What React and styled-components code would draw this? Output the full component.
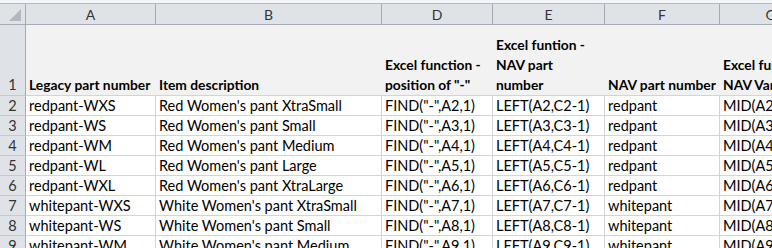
import React from "react";
import styled, { createGlobalStyle } from "styled-components";

const GlobalStyle = createGlobalStyle`
  html, body {
    margin: 0;
    padding: 0;
    background: #ffffff;
  }
  body {
    width: 772px;
    height: 248px;
    overflow: hidden;
    font-family: Lato, "Open Sans", sans-serif;
  }
`;

const Sheet = styled.div`
  width: 772px;
  height: 248px;
  overflow: hidden;
  display: flex;
  flex-direction: column;
`;

const TopStrip = styled.div`
  height: 3px;
  flex: none;
  background: #f3f5f8;
  border-bottom: 1px solid #b4bac2;
`;

const Grid = styled.div`
  display: grid;
  grid-template-columns: 26px 130px 226px 111px 112px 115px 102px;
  grid-template-rows: 21px 71px repeat(8, 20px);
  width: max-content;
`;

const ColHead = styled.div`
  background: #dfe3e8;
  border-right: 1px solid #a4abb4;
  border-bottom: 1px solid #a4abb4;
  display: flex;
  align-items: center;
  justify-content: center;
  font-size: 14px;
  color: #333;
  padding-top: 1px;
`;

const Corner = styled(ColHead)`
  position: relative;
  svg {
    position: absolute;
    right: 4px;
    bottom: 3px;
  }
`;

const RowHead = styled.div`
  background: #dfe3e8;
  border-right: 1px solid #a4abb4;
  border-bottom: 1px solid #c4c9d0;
  display: flex;
  align-items: ${(p) => (p.$tall ? "flex-end" : "center")};
  justify-content: center;
  font-size: 14.5px;
  color: #333;
  line-height: 20px;
`;

const TitleCell = styled.div`
  background: #f2f2f2;
  border-bottom: 1px solid #d4d4d4;
  display: flex;
  align-items: flex-end;
  padding: 0 3px;
  font-weight: 700;
  font-size: 13.8px;
  line-height: 20px;
  color: #000;
  overflow: hidden;
  white-space: ${(p) => p.$wrap || "nowrap"};
`;

const Cell = styled.div`
  border-right: 1px solid #d4d4d4;
  border-bottom: 1px solid #d4d4d4;
  padding: 0 3px;
  font-size: 14.5px;
  line-height: 19px;
  color: #000;
  white-space: nowrap;
  overflow: hidden;
`;

const columns = ["A", "B", "D", "E", "F", "G"];

const titles = [
  { text: "Legacy part number" },
  { text: "Item description" },
  { text: 'Excel function - position of "-"', wrap: "normal" },
  { text: "Excel funtion - NAV part number", wrap: "normal" },
  { text: "NAV part number" },
  { text: "Excel function -\nNAV Variant code", wrap: "pre" },
];

const items = [
  ["redpant", "WXS", "Red Women's pant XtraSmall"],
  ["redpant", "WS", "Red Women's pant Small"],
  ["redpant", "WM", "Red Women's pant Medium"],
  ["redpant", "WL", "Red Women's pant Large"],
  ["redpant", "WXL", "Red Women's pant XtraLarge"],
  ["whitepant", "WXS", "White Women's pant XtraSmall"],
  ["whitepant", "WS", "White Women's pant Small"],
  ["whitepant", "WM", "White Women's pant Medium"],
];

function CornerMark() {
  return (
    <svg width="12" height="12" viewBox="0 0 12 12">
      <polygon points="12,0 12,12 0,12" fill="#b3b8bf" />
    </svg>
  );
}

export default function App() {
  return (
    <Sheet>
      <GlobalStyle />
      <TopStrip />
      <Grid>
        <Corner>
          <CornerMark />
        </Corner>
        {columns.map((c) => (
          <ColHead key={c}>{c}</ColHead>
        ))}

        <RowHead $tall>1</RowHead>
        {titles.map((t) => (
          <TitleCell key={t.text} $wrap={t.wrap}>
            {t.text}
          </TitleCell>
        ))}

        {items.map(([base, size, desc], i) => {
          const r = i + 2;
          return (
            <React.Fragment key={r}>
              <RowHead>{r}</RowHead>
              <Cell>{`${base}-${size}`}</Cell>
              <Cell>{desc}</Cell>
              <Cell>{`FIND("-",A${r},1)`}</Cell>
              <Cell>{`LEFT(A${r},C${r}-1)`}</Cell>
              <Cell>{base}</Cell>
              <Cell>{`MID(A${r},C${r}+1,LEN(A${r})-C${r})`}</Cell>
            </React.Fragment>
          );
        })}
      </Grid>
    </Sheet>
  );
}
